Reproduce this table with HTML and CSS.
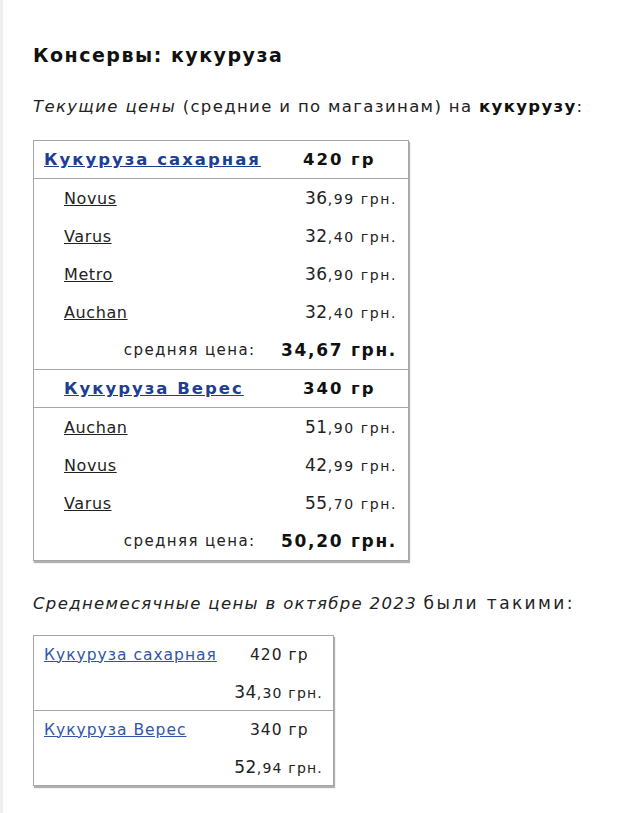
FILE: index.html
```html
<!DOCTYPE html>
<html lang="ru">
<head>
<meta charset="utf-8">
<title>Консервы: кукуруза</title>
<link rel="stylesheet" href="styles.css">
</head>
<body>
<div class="page">
  <h1 class="title">Консервы: кукуруза</h1>
  <p class="lead"><i>Текущие цены</i> (средние и по магазинам) на <b>кукурузу</b>:</p>

  <table class="prices">
    <colgroup><col class="c-name"><col class="c-val"></colgroup>
    <tr class="head">
      <th class="prod"><a href="#">Кукуруза сахарная</a></th>
      <th class="weight">420 гр</th>
    </tr>
    <tr><td class="store"><a href="#">Novus</a></td><td class="price"><span class="big">36</span>,99 грн.</td></tr>
    <tr><td class="store"><a href="#">Varus</a></td><td class="price"><span class="big">32</span>,40 грн.</td></tr>
    <tr><td class="store"><a href="#">Metro</a></td><td class="price"><span class="big">36</span>,90 грн.</td></tr>
    <tr><td class="store"><a href="#">Auchan</a></td><td class="price"><span class="big">32</span>,40 грн.</td></tr>
    <tr class="avg"><td class="avg-label">средняя цена:</td><td class="avg-val">34,67 грн.</td></tr>
    <tr class="head">
      <th class="prod prod-ind"><a href="#">Кукуруза Верес</a></th>
      <th class="weight">340 гр</th>
    </tr>
    <tr><td class="store"><a href="#">Auchan</a></td><td class="price"><span class="big">51</span>,90 грн.</td></tr>
    <tr><td class="store"><a href="#">Novus</a></td><td class="price"><span class="big">42</span>,99 грн.</td></tr>
    <tr><td class="store"><a href="#">Varus</a></td><td class="price"><span class="big">55</span>,70 грн.</td></tr>
    <tr class="avg"><td class="avg-label">средняя цена:</td><td class="avg-val">50,20 грн.</td></tr>
  </table>

  <p class="lead lead2"><i>Среднемесячные цены в октябре 2023</i> <span class="plain">были такими:</span></p>

  <table class="monthly">
    <tr><td class="m-name"><a href="#">Кукуруза сахарная</a></td><td class="m-weight">420 гр</td></tr>
    <tr class="m-sep"><td></td><td class="m-price"><span class="big">34</span>,30 грн.</td></tr>
    <tr><td class="m-name"><a href="#">Кукуруза Верес</a></td><td class="m-weight">340 гр</td></tr>
    <tr><td></td><td class="m-price"><span class="big">52</span>,94 грн.</td></tr>
  </table>
</div>
</body>
</html>
```
FILE: styles.css
```css
html, body {
  margin: 0;
  padding: 0;
  background: #ffffff;
}
body {
  font-family: "DejaVu Sans", Verdana, sans-serif;
  color: #1a1a1a;
}
.page {
  border-left: 3px solid #eeeeee;
  min-height: 813px;
  box-sizing: border-box;
  padding: 41px 0 0 30px;
}
.title {
  margin: 0;
  font-size: 19px;
  line-height: 28px;
  font-weight: bold;
  letter-spacing: 1.5px;
  color: #111;
}
.lead {
  margin: 27px 0 0;
  font-size: 16.5px;
  line-height: 22px;
  letter-spacing: 1.35px;
  color: #222;
}
.lead i { font-style: italic; }
.lead b { font-weight: bold; color: #111; }

.prices {
  margin-top: 22px;
  border-collapse: collapse;
  border: 1px solid #a6a6a6;
  box-shadow: 1px 2px 1px #b0b0b0;
  width: 376px;
}
.c-name { width: 237px; }
.prices th, .prices td { padding: 0; white-space: nowrap; }
.prices .head th {
  height: 37px;
  border-bottom: 1px solid #a6a6a6;
  font-weight: bold;
  font-size: 16.5px;
  letter-spacing: 2px;
  color: #111;
  vertical-align: middle;
}
.prices tr.avg + tr.head th { border-top: 1px solid #a6a6a6; }
.prod { text-align: left; padding-left: 10px !important; }
.prod-ind { padding-left: 30px !important; }
.prod a { color: #1d3e93; text-decoration: underline; }
.weight { text-align: center; }
.prices td { height: 38px; vertical-align: middle; }
.store { padding-left: 30px !important; font-size: 16px; letter-spacing: 0.6px; }
.store a { color: #222; text-decoration: underline; }
.price {
  text-align: right;
  padding-right: 11px !important;
  font-size: 14px;
  letter-spacing: 1.6px;
  color: #222;
}
.big { font-size: 17px; letter-spacing: 0.5px; }
.avg-label {
  text-align: right;
  padding-right: 15px !important;
  font-size: 15px;
  letter-spacing: 1.4px;
  color: #222;
}
.avg-val {
  text-align: right;
  padding-right: 11px !important;
  font-weight: bold;
  font-size: 17px;
  letter-spacing: 1.7px;
  color: #111;
}

.lead2 { margin-top: 31px; }
.lead2 .plain { font-size: 17px; letter-spacing: 2.4px; }

.monthly {
  margin-top: 20px;
  border-collapse: collapse;
  border: 1px solid #a6a6a6;
  box-shadow: 1px 2px 1px #b0b0b0;
  width: 301px;
}
.monthly td {
  padding: 0;
  height: 37px;
  vertical-align: middle;
  white-space: nowrap;
  font-size: 15.5px;
  letter-spacing: 1px;
  color: #222;
}
.m-name { padding-left: 10px !important; width: 190px; }
.m-name a { color: #2f56a8; text-decoration: underline; }
.m-weight { text-align: left; padding-left: 16px !important; }
.monthly .m-price { text-align: right; padding-right: 10px; font-size: 14px; letter-spacing: 1.2px; }
.m-price .big { font-size: 17px; letter-spacing: 0.5px; }
.m-sep td { border-bottom: 1px solid #a6a6a6; }
```
